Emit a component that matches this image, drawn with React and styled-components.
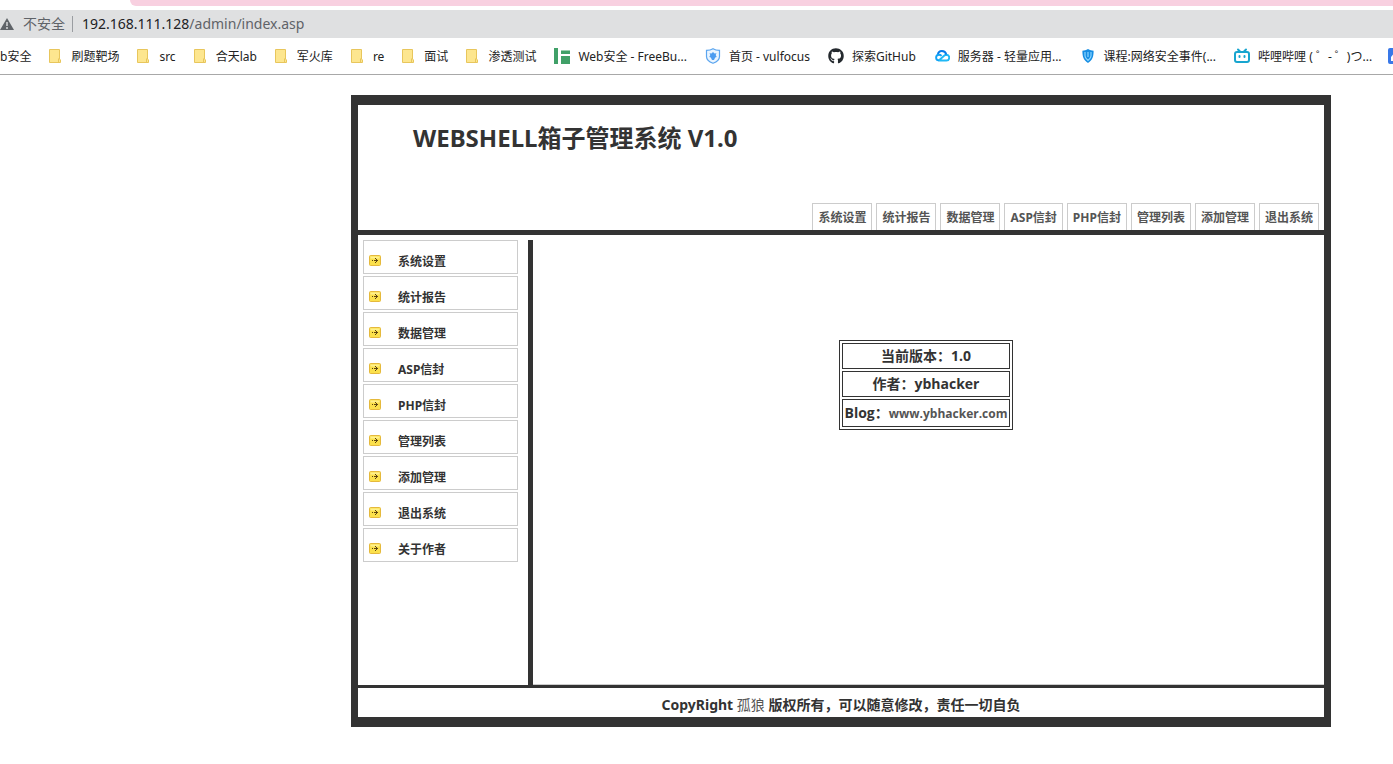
import React from 'react'
import styled, { createGlobalStyle } from 'styled-components'
import { FaGithub } from 'react-icons/fa'

const GlobalStyle = createGlobalStyle`
    * {
        box-sizing: border-box;
    }

    body {
        margin: 0;
        background: #fff;
        color: #333;
        font-family: "Noto Sans", "Noto Sans CJK SC", sans-serif;
        overflow-x: hidden;
    }

    a {
        color: inherit;
        text-decoration: none;
    }
`

const Browser = styled.header`
    border-bottom: 1px solid #a8a8a8;
    overflow: hidden;
`

const TabStrip = styled.div`
    height: 6px;
    margin: 0 0 4px 130px;
    background: #f8d0e0;
    border-bottom-left-radius: 6px;
`

const AddressBar = styled.div`
    display: flex;
    align-items: center;
    height: 28px;
    background: #dfe0e1;
    color: #5f6368;
    font-size: 14px;
    line-height: 28px;
    white-space: nowrap;
`

const Insecure = styled.span`
    margin-left: 9px;
    padding-right: 7px;
    border-right: 1px solid #9a9da1;
    line-height: 16px;
`

const Url = styled.span`
    margin-left: 9px;

    b {
        font-weight: 400;
        color: #202124;
    }
`

const Bookmarks = styled.nav`
    display: flex;
    gap: 16px;
    height: 36px;
    align-items: center;
    color: #222;
    font-size: 12px;
    line-height: 16px;
    white-space: nowrap;
`

const Bookmark = styled.a`
    display: flex;
    flex: none;
    gap: 8px;
    align-items: center;
    margin-left: ${props => props.$site ? 2 : 0}px;

    svg {
        flex: none;
    }

    span {
        padding-top: 2px;
    }
`

const Frame = styled.div`
    max-width: 980px;
    margin: 20px 62px 36px auto;
    border: solid #333;
    border-width: 10px 7px;
    font-weight: 700;
`

const Top = styled.div`
    display: flex;
    flex-direction: column;
    justify-content: space-between;
    height: 130px;
    border-bottom: 5px solid #333;
`

const Title = styled.h1`
    margin: 16px 0 0 55px;
    font-size: 24px;
    line-height: 34px;
`

const Tabs = styled.nav`
    display: flex;
    justify-content: flex-end;
    gap: 4px;
    padding-right: 5px;
`

const Tab = styled.a`
    padding: 4px 5px 0;
    height: 27px;
    border: 1px solid #ccc;
    border-bottom: 0;
    color: #555;
    font-size: 12px;
    line-height: 20px;
`

const Main = styled.div`
    display: flex;
    min-height: 450px;
    padding-top: 5px;
`

const Sidebar = styled.nav`
    display: flex;
    flex-direction: column;
    gap: 2px;
    width: 170px;
    padding: 0 10px 0 5px;
`

const SideLink = styled.a`
    display: flex;
    align-items: center;
    gap: 17px;
    height: 34px;
    padding: 9px 0 0 5px;
    border: 1px solid #ccc;
    font-size: 12px;
    line-height: 20px;

    svg {
        flex: none;
        margin-bottom: 2px;
    }
`

const Content = styled.main`
    flex: 1;
    padding: 100px 5px 0 0;
    border-left: 5px solid #333;
    box-shadow: inset 0 -1px #ccc;
`

const Info = styled.table`
    margin: 0 auto;
    border: 1px solid #333;
    border-spacing: 2px;
    font-family: "Open Sans", "Noto Sans CJK SC", sans-serif;
    font-size: 14px;
    line-height: 22px;
    text-align: center;

    td {
        padding: 1px;
        border: 1px solid #333;
    }

    tr:last-child td {
        line-height: 23px;
    }

    a {
        color: #555;
        font-size: 12px;
    }
`

const Footer = styled.footer`
    height: 32px;
    border-top: 3px solid #333;
    font-size: 14px;
    line-height: 34px;
    text-align: center;

    a {
        color: #555;
        font-weight: 400;
    }
`

const Warning = () =>
    <svg width="14" height="14" viewBox="0 0 14 14">
        <path d="M7 1l7 12H0z" fill="#5f6368" />
        <path d="M7 5v4M7 10v2" stroke="#dfe0e1" strokeWidth="1.4" />
    </svg>

const Folder = () =>
    <svg width="16" height="16" viewBox="0 0 16 16">
        <path d="M2.5 1.5h10v9.500l1 1v2.500h-11z" fill="#fde68f" stroke="#e8c65c" />
        <path d="M11.500 14v-3l1-1" fill="none" stroke="#e8c65c" />
    </svg>

const FreeBuf = () =>
    <svg width="16" height="16" viewBox="0 0 16 16" fill="#40a068">
        <path d="M0 0h4v16H0zM7 2h9v4H7zM7 8h9v2H7zM7 10h9v6H7z" />
        <path d="M7 2h9v1H7z" fill="#9bd0b1" />
    </svg>

const Vulfocus = () =>
    <svg width="16" height="16" viewBox="0 0 16 16">
        <path d="M8 .7c2 1.300 4 1.700 6.500 1.700v6.100c0 3-2.500 5.300-6.500 6.800-4-1.500-6.500-3.800-6.500-6.800V2.400C4 2.400 6 2 8 .7z" fill="#eaf5ff" stroke="#5ba5ef" strokeWidth="1.200" />
        <path d="M8 4l1.500 1.500 2-.3-.8 1.800 1 2-1.500.5L9 12H7l-1.200-2.500-1.500-.5 1-2-.8-1.800 2 .3z" fill="#4c9cf0" />
    </svg>

const Cloud = () =>
    <svg width="16" height="16" viewBox="0 0 16 16" fill="none" strokeWidth="1.900">
        <path d="M4.800 12.500h7.400a2.900 2.900 0 0 0 .2-5.800c-.9 0-1.500.3-2.300 1L4.800 12.500" stroke="#20b8f5" />
        <path d="M3.800 6.800C4.500 1.800 11 1.800 12.300 6.500" stroke="#087bea" />
        <path d="M5 12.500a2.900 2.900 0 1 1 0-5.800c1 0 1.800.4 2.600 1.200" stroke="#12a3f4" />
    </svg>

const Shield = () =>
    <svg width="16" height="16" viewBox="0 0 16 16">
        <path d="M8 1c2 1.200 3.500 1.700 5.600 1.700 0 5.500-.8 9-5.600 12.300C3.200 11.700 2.400 8.200 2.400 2.700 4.500 2.700 6 2.200 8 1z" fill="#168de3" />
        <path d="M5 4v4c0 2 1.200 3 3 4.500C9.800 11 11 10 11 8V4M8 4v5" fill="none" stroke="#8bd6ff" strokeWidth="1.200" />
    </svg>

const Bilibili = () =>
    <svg width="16" height="16" viewBox="0 0 16 16" fill="none" stroke="#18a5cf" strokeWidth="2" strokeLinecap="round">
        <rect x="1" y="4" width="14" height="10" rx="2" />
        <path d="M4 1.500l2 2M12 1.500l-2 2M5.500 8v1M10.500 8v1" />
    </svg>

const BlueApp = () =>
    <svg width="16" height="16" viewBox="0 0 16 16">
        <rect width="16" height="16" rx="2" fill="#3978e8" />
        <path d="M3 13V9l5-6 5 3-7 3 4 4z" fill="#fff" />
    </svg>

const Arrow = () =>
    <svg width="12" height="11" viewBox="0 0 12 11">
        <rect x=".5" y=".5" width="11" height="10" rx="1" fill="#fbe04c" stroke="#e5b93c" />
        <path d="M1.500 1.500h9v2h-9z" fill="#fff08c" />
        <path d="M3 5h1v1H3zM5 5h4v1H5zM6 3h1v1H6zM7 4h1v1H7zM7 6h1v1H7zM6 7h1v1H6z" fill="#5b4310" />
    </svg>

const bookmarks = [
    { text: 'b安全' },
    { icon: <Folder />, text: '刷题靶场' },
    { icon: <Folder />, text: 'src' },
    { icon: <Folder />, text: '合天lab' },
    { icon: <Folder />, text: '军火库' },
    { icon: <Folder />, text: 're' },
    { icon: <Folder />, text: '面试' },
    { icon: <Folder />, text: '渗透测试' },
    { icon: <FreeBuf />, text: 'Web安全 - FreeBu...', site: true },
    { icon: <Vulfocus />, text: '首页 - vulfocus', site: true },
    { icon: <FaGithub size={16} color="#24292e" />, text: '探索GitHub', site: true },
    { icon: <Cloud />, text: '服务器 - 轻量应用...', site: true },
    { icon: <Shield />, text: '课程:网络安全事件(...', site: true },
    { icon: <Bilibili />, text: '哔哩哔哩 ( ゜- ゜)つ...', site: true },
    { icon: <BlueApp />, text: '' },
]

const sections = ['系统设置', '统计报告', '数据管理', 'ASP信封', 'PHP信封', '管理列表', '添加管理', '退出系统']

const App = () =>
    <>
        <GlobalStyle />
        <Browser>
            <TabStrip />
            <AddressBar>
                <Warning />
                <Insecure>不安全</Insecure>
                <Url><b>192.168.111.128</b>/admin/index.asp</Url>
            </AddressBar>
            <Bookmarks>
                {bookmarks.map(({ icon, text, site }, i) =>
                    <Bookmark key={i} href="#" $site={site}>{icon}{text && <span>{text}</span>}</Bookmark>
                )}
            </Bookmarks>
        </Browser>
        <Frame>
            <Top>
                <Title>WEBSHELL箱子管理系统 V1.0</Title>
                <Tabs>
                    {sections.map(name => <Tab key={name} href="#">{name}</Tab>)}
                </Tabs>
            </Top>
            <Main>
                <Sidebar>
                    {[...sections, '关于作者'].map(name =>
                        <SideLink key={name} href="#"><Arrow />{name}</SideLink>
                    )}
                </Sidebar>
                <Content>
                    <Info>
                        <tbody>
                            <tr><td>当前版本：1.0</td></tr>
                            <tr><td>作者：ybhacker</td></tr>
                            <tr><td>Blog：<a href="#">www.ybhacker.com</a></td></tr>
                        </tbody>
                    </Info>
                </Content>
            </Main>
            <Footer>
                CopyRight <a href="#">孤狼</a> 版权所有，可以随意修改，责任一切自负
            </Footer>
        </Frame>
    </>

export default App
